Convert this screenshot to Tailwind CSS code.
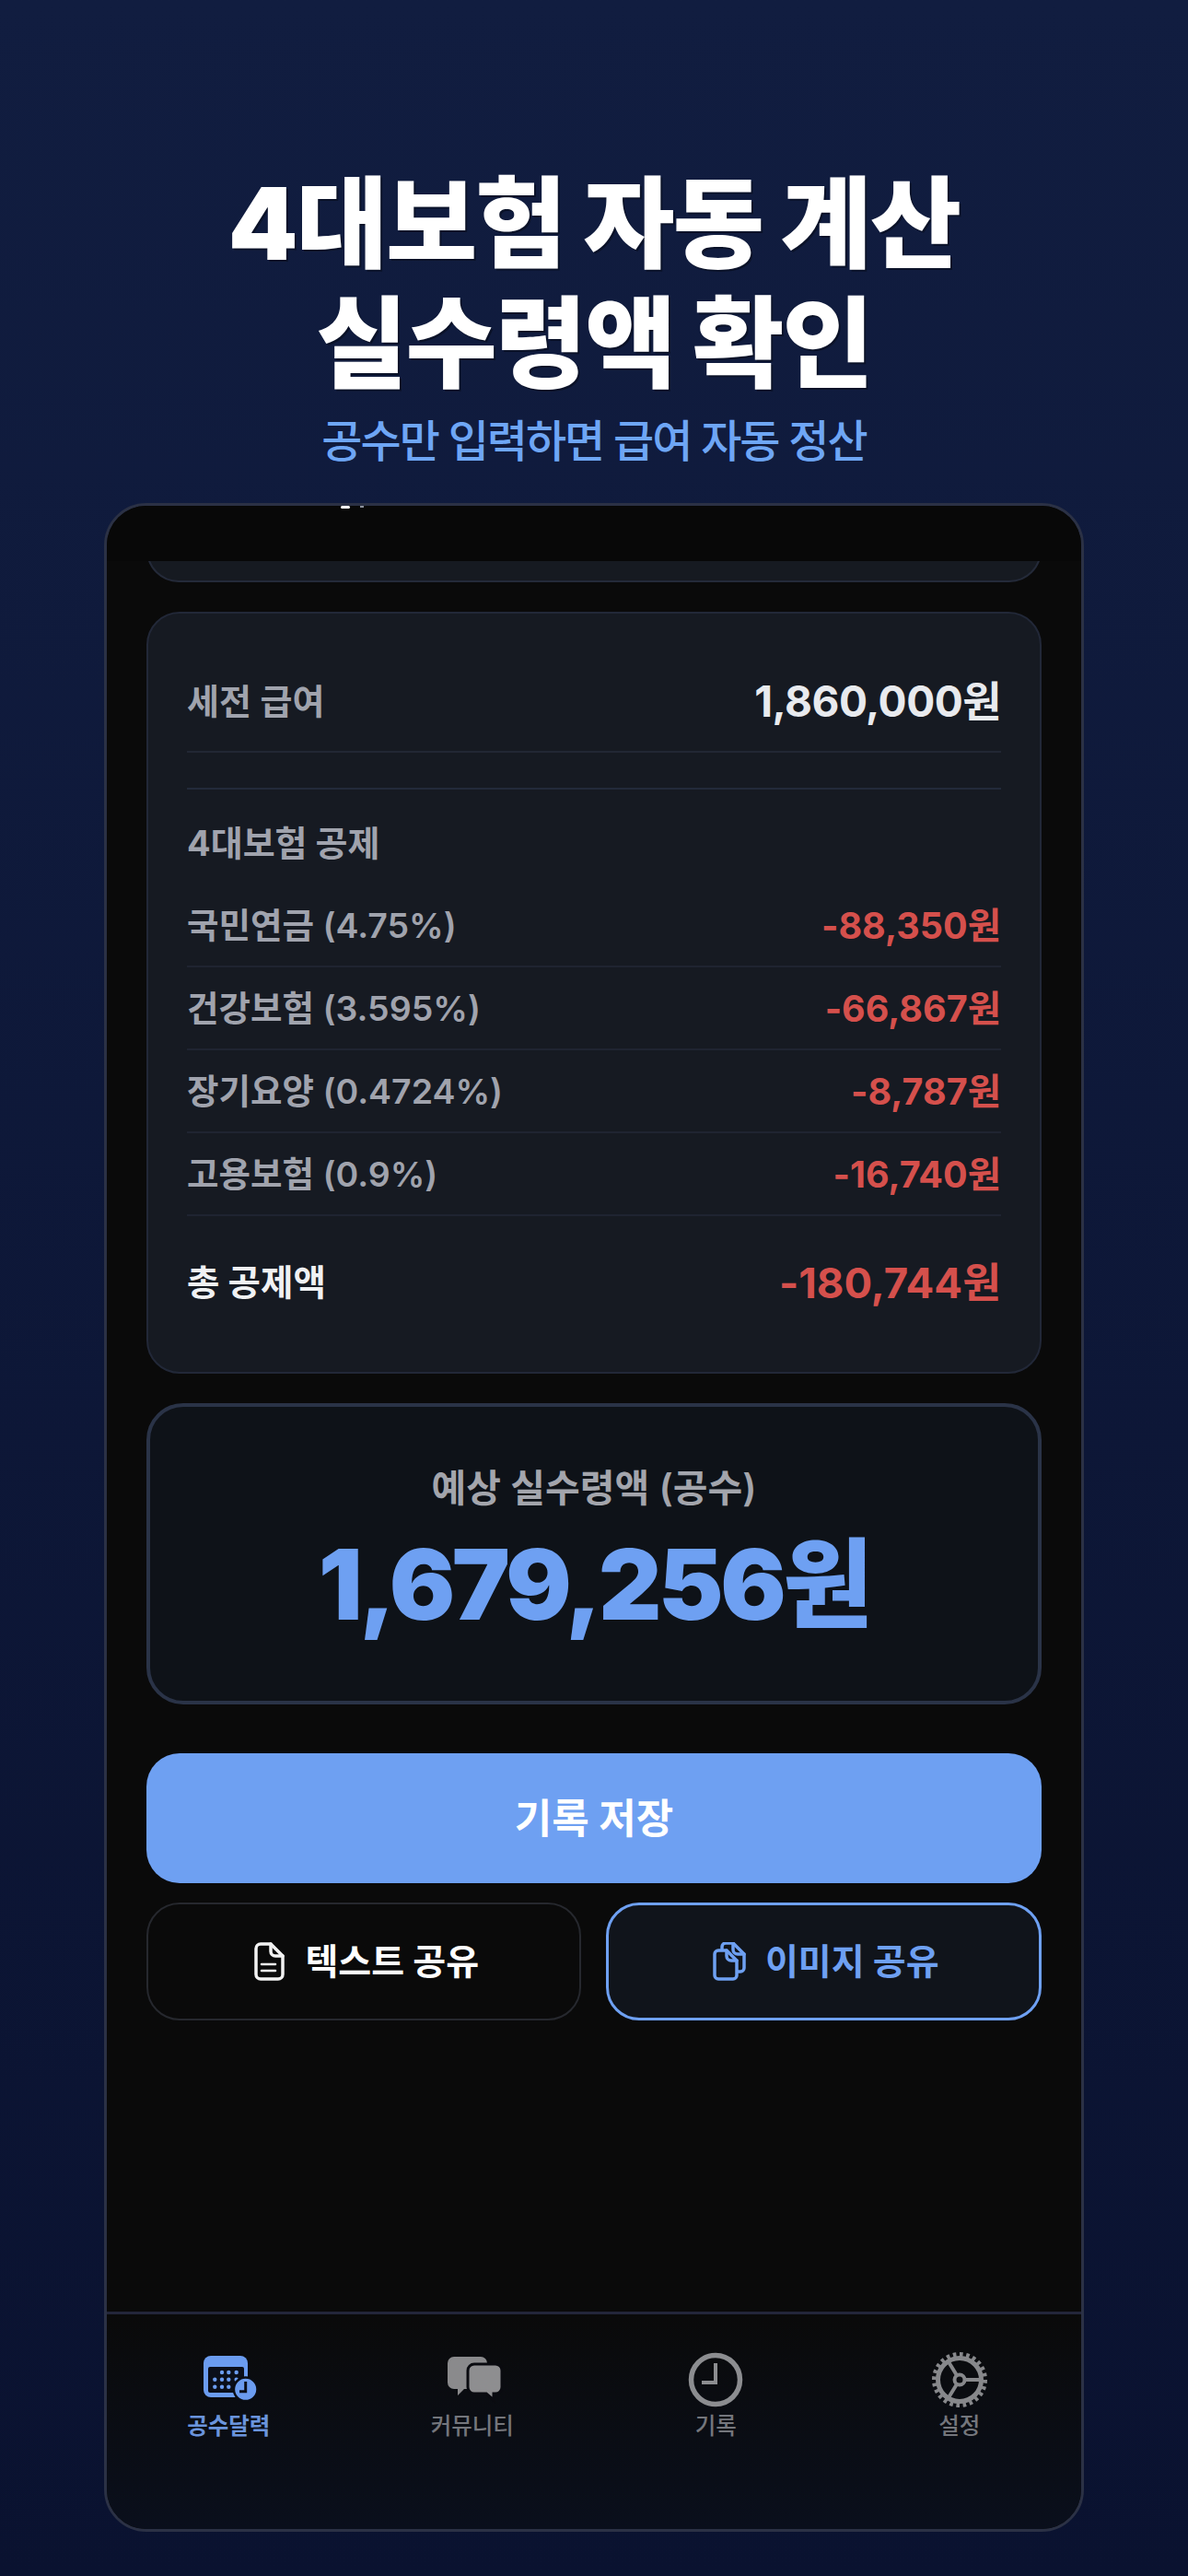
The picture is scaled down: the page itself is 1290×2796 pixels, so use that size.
<!DOCTYPE html>
<html lang="ko">

<head>
    <meta charset="UTF-8">
    <title>4대보험 자동 계산</title>
    <script src="https://cdn.jsdelivr.net/npm/@tailwindcss/browser@4"></script>
</head>

<body class="w-[1290px] h-[2796px] overflow-hidden flex flex-col items-center bg-linear-to-b from-[#111d40] to-[#0a1230] font-['Inter','Noto_Sans_CJK_KR',sans-serif]">

    <!-- 상단 문구 -->
    <h1 class="mt-[178px] text-center text-white text-[108px] leading-[130px] font-black tracking-[-2px] [text-shadow:2px_2px_0_rgba(0,0,0,0.35)]">4대보험 자동 계산<br>실수령액 확인</h1>
    <p class="mt-[11px] text-center text-[#6ea6f5] text-[48px] leading-[60px] font-medium tracking-[-2px]">공수만 입력하면 급여 자동 정산</p>

    <!-- 폰 화면 -->
    <div class="relative mt-[37px] w-[1064px] h-[2202px] shrink-0 flex flex-col overflow-hidden rounded-[46px] border-[3px] border-[#2b3145] bg-[#0a0a0a]">
        <span class="absolute left-[254px] top-[0px] w-[10px] h-[3px] rounded-full bg-white"></span>
        <span class="absolute left-[275px] top-[0px] w-[4px] h-[2px] bg-[#8b8f99]"></span>

        <div class="h-[60px] shrink-0 bg-[#080808]"></div>

        <div class="flex flex-col pl-[43px] pr-[43px]">
            <!-- 스크롤로 잘린 카드 -->
            <div class="h-[23px] overflow-hidden flex items-end">
                <div class="w-full h-[70px] shrink-0 rounded-[36px] border-2 border-[#242a39] bg-[#161a21]"></div>
            </div>

            <!-- 급여 내역 -->
            <div class="mt-[32px] rounded-[36px] border-2 border-[#222838] bg-[#161a22] px-[42px] pt-[42px] pb-[23px]">
                <div class="h-[109px] flex items-center justify-between border-b-2 border-[#222734]">
                    <span class="text-[38px] font-semibold text-[#a0a3ad]">세전 급여</span>
                    <span class="text-[46px] font-bold text-[#e8eaee] tracking-[-0.5px]">1,860,000원</span>
                </div>
                <div class="mt-[38px] border-t-2 border-[#232a3a] pt-[41px] pb-[28px]">
                    <div class="text-[38px] leading-[34px] font-bold text-[#a0a3ad]">4대보험 공제</div>
                </div>
                <div class="h-[90px] pt-[4px] flex items-center justify-between border-b-2 border-[#1f2431]">
                    <span class="text-[37.5px] font-semibold text-[#a0a3ad] -mt-[2px]">국민연금 (4.75%)</span>
                    <span class="text-[39.5px] font-bold text-[#d5504c]">-88,350원</span>
                </div>
                <div class="h-[90px] pt-[4px] flex items-center justify-between border-b-2 border-[#1f2431]">
                    <span class="text-[37.5px] font-semibold text-[#a0a3ad] -mt-[2px]">건강보험 (3.595%)</span>
                    <span class="text-[39.5px] font-bold text-[#d5504c]">-66,867원</span>
                </div>
                <div class="h-[90px] pt-[4px] flex items-center justify-between border-b-2 border-[#1f2431]">
                    <span class="text-[37.5px] font-semibold text-[#a0a3ad] -mt-[2px]">장기요양 (0.4724%)</span>
                    <span class="text-[39.5px] font-bold text-[#d5504c]">-8,787원</span>
                </div>
                <div class="h-[90px] pt-[4px] flex items-center justify-between border-b-2 border-[#1f2431]">
                    <span class="text-[37.5px] font-semibold text-[#a0a3ad] -mt-[2px]">고용보험 (0.9%)</span>
                    <span class="text-[39.5px] font-bold text-[#d5504c]">-16,740원</span>
                </div>
                <div class="h-[146px] flex items-center justify-between">
                    <span class="text-[38.5px] font-bold text-[#f0f1f3]">총 공제액</span>
                    <span class="text-[45.5px] font-bold text-[#d5504c]">-180,744원</span>
                </div>
            </div>

            <!-- 실수령액 -->
            <div class="mt-[32px] h-[327px] flex flex-col items-center rounded-[40px] border-4 border-[#2a3347] bg-[#0e1218] pt-[66px]">
                <div class="text-[41px] leading-[44px] font-semibold text-[#a3a5ac]">예상 실수령액 (공수)</div>
                <div class="mt-[23px] text-[#6ea0f2] text-[106px] leading-[120px] font-black tracking-[-3.5px]">1,679,256원</div>
            </div>

            <button class="mt-[53px] h-[141px] rounded-[36px] bg-[#6ea0f2] text-white text-[44px] font-bold">기록 저장</button>

            <div class="mt-[21px] flex gap-[27px]">
                <button class="flex-1 h-[128px] flex items-center justify-center gap-[21px] pl-[5px] rounded-[36px] border-2 border-[#26282e] text-white text-[39px] font-bold">
                    <svg class="w-[36px] h-[42px]" viewBox="0 0 34 42" fill="none" stroke="#f2f2f2" stroke-width="3.5" stroke-linejoin="round" stroke-linecap="round">
                        <path d="M8 2h11l13 13v20a5 5 0 0 1-5 5H8a5 5 0 0 1-5-5V7a5 5 0 0 1 5-5z" />
                        <path d="M19 2v8a5 5 0 0 0 5 5h8" />
                        <path d="M9 24h15M9 31h15" stroke-width="2.6" />
                    </svg>
                    텍스트 공유
                </button>
                <button class="flex-1 h-[128px] flex items-center justify-center gap-[21px] pl-[5px] rounded-[36px] border-[3px] border-[#6ea0f2] bg-[#10141b] text-[#6ea0f2] text-[39px] font-bold">
                    <svg class="w-[36px] h-[42px]" viewBox="0 0 36 42" fill="none" stroke="#6ea0f2" stroke-width="3.5" stroke-linejoin="round" stroke-linecap="round">
                        <path d="M10 7V5a4 4 0 0 1 4-4h8l12 12v15a4 4 0 0 1-4 4h-3" />
                        <path d="M22 1v7a5 5 0 0 0 5 5h7" />
                        <path d="M6 9h9l11 11v16a4 4 0 0 1-4 4H6a4 4 0 0 1-4-4V13a4 4 0 0 1 4-4z" />
                        <path d="M15 9v6a5 5 0 0 0 5 5h6" />
                    </svg>
                    이미지 공유
                </button>
            </div>
        </div>

        <!-- 하단 탭 -->
        <nav class="mt-auto h-[236px] shrink-0 grid grid-cols-4 border-t-[3px] border-[#23263a] bg-linear-to-b from-[#0a0a0a] to-[#0a0f1c] pt-[41px]">
            <div class="flex flex-col items-center">
                <svg class="w-[60px] h-[60px] translate-x-[2px]" viewBox="0 0 60 60">
                    <rect x="1" y="4" width="48" height="45" rx="8" fill="#6b9cf0" />
                    <rect x="6" y="16" width="39" height="28" rx="2" fill="#0b0f1a" />
                    <g fill="#6b9cf0">
                        <circle cx="21" cy="22" r="2.2" /><circle cx="28.3" cy="22" r="2.2" /><circle cx="36.7" cy="22" r="2.2" />
                        <circle cx="13.3" cy="29.7" r="2.2" /><circle cx="21" cy="29.7" r="2.2" /><circle cx="28.3" cy="29.7" r="2.2" /><circle cx="36.7" cy="29.7" r="2.2" />
                        <circle cx="13.3" cy="37.7" r="2.2" /><circle cx="21" cy="37.7" r="2.2" /><circle cx="28.3" cy="37.7" r="2.2" />
                    </g>
                    <circle cx="46.7" cy="40.3" r="12.8" fill="#6b9cf0" stroke="#0a0d14" stroke-width="2.5" />
                    <path d="M46.7 32v10.7H40" fill="none" stroke="#0b0f1a" stroke-width="3" />
                </svg>
                <span class="mt-[5px] text-[24.5px] leading-[30px] font-semibold text-[#6a94dc]">공수달력</span>
            </div>
            <div class="flex flex-col items-center">
                <svg class="w-[60px] h-[60px] translate-x-[3px]" viewBox="0 0 60 60">
                    <path d="M7 5h29a7 7 0 0 1 7 7v21a7 7 0 0 1-7 7H18l-7 7v-7H7a7 7 0 0 1-7-7V12a7 7 0 0 1 7-7z" fill="#8a8a8c" />
                    <path d="M29 13h23a7 7 0 0 1 7 7v18a7 7 0 0 1-7 7h-2v7l-8-7H29a7 7 0 0 1-7-7V20a7 7 0 0 1 7-7z" fill="#8e8e90" stroke="#0a0b10" stroke-width="3" />
                </svg>
                <span class="mt-[5px] text-[24.5px] leading-[30px] font-medium text-[#74767c]">커뮤니티</span>
            </div>
            <div class="flex flex-col items-center">
                <svg class="w-[60px] h-[60px]" viewBox="0 0 60 60" fill="none" stroke="#8c8d90">
                    <circle cx="30" cy="30" r="26.5" stroke-width="5.5" />
                    <path d="M30 12v21H15" stroke-width="4" />
                </svg>
                <span class="mt-[5px] text-[24.5px] leading-[30px] font-medium text-[#74767c]">기록</span>
            </div>
            <div class="flex flex-col items-center">
                <svg class="w-[64px] h-[60px]" viewBox="0 0 64 60" fill="none" stroke="#87888b">
                    <circle cx="32" cy="30" r="23.5" stroke-width="5" />
                    <circle cx="32" cy="30" r="27.5" stroke-width="5" pathLength="48" stroke-dasharray="1 1" />
                    <circle cx="32" cy="30" r="5.5" stroke-width="4" />
                    <path d="M37.5 30H56M29 25.2 19 9M29 34.8 19 51" stroke-width="4" />
                </svg>
                <span class="mt-[5px] text-[24.5px] leading-[30px] font-medium text-[#74767c]">설정</span>
            </div>
        </nav>
    </div>

</body>

</html>
